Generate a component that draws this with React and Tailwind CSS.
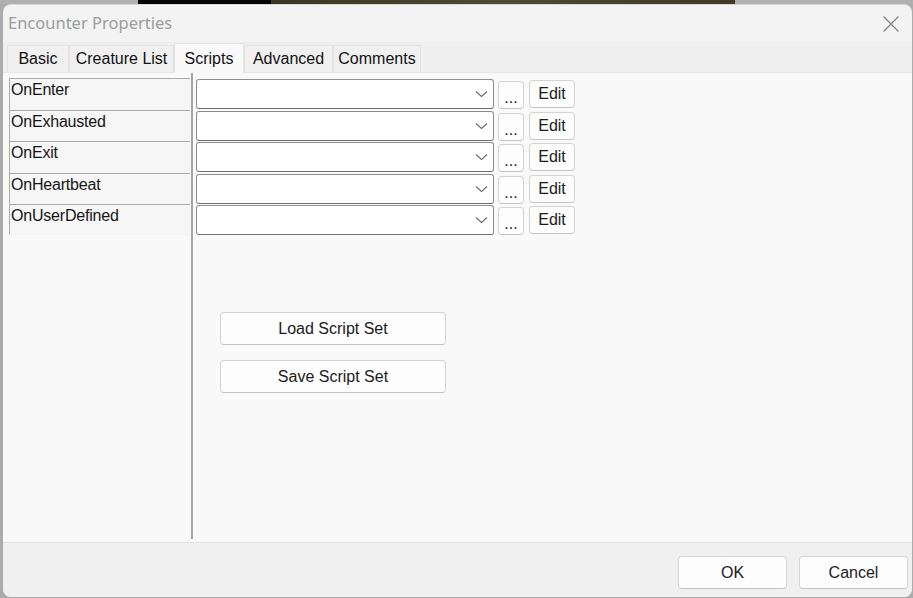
import React from "react";

const rows = [
  { name: "OnEnter", h: "h-[32px]" },
  { name: "OnExhausted", h: "h-[31px]" },
  { name: "OnExit", h: "h-[32px]" },
  { name: "OnHeartbeat", h: "h-[31px]" },
  { name: "OnUserDefined", h: "h-[31px]" },
];

const tabs = [
  { name: "Basic", w: "w-[62px]" },
  { name: "Creature List", w: "w-[105px]" },
  { name: "Scripts", w: "w-[70px]", active: true },
  { name: "Advanced", w: "w-[89px]" },
  { name: "Comments", w: "w-[88px]" },
];

function Chevron() {
  return (
    <svg width="13" height="8" viewBox="0 0 13 8" className="mr-[5px]">
      <path d="M1 1.5 L6.5 6.5 L12 1.5" fill="none" stroke="#6a6a6a" strokeWidth="1.1" />
    </svg>
  );
}

function Btn({ children, className }) {
  return (
    <div
      className={
        "flex items-center justify-center rounded-[4px] border border-[#d3d3d3] border-b-[#c4c4c4] bg-[#fdfdfd] text-[16px] text-[#1b1b1b] " +
        className
      }
    >
      {children}
    </div>
  );
}

export default function App() {
  return (
    <div
      className="w-[913px] h-[598px] bg-[#acacac] flex flex-col overflow-hidden"
      style={{ fontFamily: "'Liberation Sans', Arial, sans-serif" }}
    >
      {/* desktop strip */}
      <div className="h-[4px] flex shrink-0">
        <div className="w-[138px] bg-[#b0b0b0]" />
        <div className="w-[133px] bg-[#050505]" />
        <div className="w-[464px] bg-gradient-to-r from-[#3a3623] via-[#4f4a33] to-[#403a25]" />
        <div className="flex-1 bg-[#b0b0b0]" />
      </div>

      {/* window */}
      <div className="flex-1 ml-[3px] mr-[1px] mb-[1px] rounded-t-[8px] rounded-b-[8px] bg-[#f3f3f3] border-t border-[#d8d8d8] flex flex-col overflow-hidden">
        {/* title bar */}
        <div className="h-[37px] shrink-0 flex items-center justify-between pl-[5px] pr-[13px]">
          <span
            className="text-[16.5px] text-[#9c9c9c]"
            style={{ fontFamily: "'Noto Sans', 'Open Sans', sans-serif" }}
          >
            Encounter Properties
          </span>
          <svg width="16" height="16" viewBox="0 0 16 16">
            <path d="M0.5 0.5 L15.5 15.5 M15.5 0.5 L0.5 15.5" stroke="#808080" strokeWidth="1.2" />
          </svg>
        </div>

        {/* tab strip */}
        <div className="h-[30px] shrink-0 bg-[#efefef] flex items-end pl-[4px]">
          {tabs.map((t) =>
            t.active ? (
              <div
                key={t.name}
                className={
                  t.w +
                  " h-[30px] -mb-[1px] bg-[#f9f9f9] border border-b-0 border-[#e2e2e2] rounded-t-[2px] flex items-start justify-center pt-[3px] text-[16px] text-[#111] relative z-10"
                }
              >
                {t.name}
              </div>
            ) : (
              <div
                key={t.name}
                className={
                  t.w +
                  " h-[27px] bg-[#f0f0f0] border border-b-0 border-[#e3e3e3] flex items-center justify-center pb-[1px] text-[16px] text-[#111]"
                }
              >
                {t.name}
              </div>
            )
          )}
        </div>

        {/* content */}
        <div className="flex-1 bg-[#f9f9f9] border-t border-[#e6e6e6] flex pl-[5px]">
          {/* label column */}
          <div className="w-[182px] pt-[5px] flex flex-col">
            {rows.map((r) => (
              <div
                key={r.name}
                className={
                  r.h +
                  " border-t border-l border-[#a9a9a9] border-b border-b-[#f4f4f4] bg-[#f6f6f6] pl-[1px] pt-[2px] text-[16px] leading-[18px] text-[#151515] ml-[1px] tracking-[-0.2px]"
                }
              >
                {r.name}
              </div>
            ))}
          </div>

          {/* divider */}
          <div className="w-[3px] ml-[1px] mb-[3px] border-l-[2px] border-[#a3a3a3] border-r border-r-[#ffffff]" />

          {/* right column */}
          <div className="flex flex-col pl-[2px] pt-[6px]">
            {rows.map((r) => (
              <div key={r.name} className={r.h + " flex items-start gap-[4px]"}>
                <div className="w-[298px] h-[30px] bg-white border border-[#8e8e8e] border-b-[#6e6e6e] rounded-[3px] flex items-center justify-end">
                  <Chevron />
                </div>
                <Btn className="w-[26px] h-[28px] mt-[2px] items-end pb-[3px] leading-[14px] text-[14px]">...</Btn>
                <Btn className="w-[46px] h-[28px] mt-[1px] ml-[1px]">Edit</Btn>
              </div>
            ))}

            <Btn className="w-[226px] h-[33px] ml-[24px] mt-[76px]">Load Script Set</Btn>
            <Btn className="w-[226px] h-[33px] ml-[24px] mt-[15px]">Save Script Set</Btn>
          </div>
        </div>

        {/* footer */}
        <div className="h-[55px] shrink-0 bg-[#f0f0f0] border-t border-[#e3e3e3] flex justify-end items-start pt-[13px] pr-[4px] gap-[12px]">
          <Btn className="w-[109px] h-[33px] border-[#d6d6d6]">OK</Btn>
          <Btn className="w-[109px] h-[33px] border-[#d6d6d6]">Cancel</Btn>
        </div>
      </div>
    </div>
  );
}
